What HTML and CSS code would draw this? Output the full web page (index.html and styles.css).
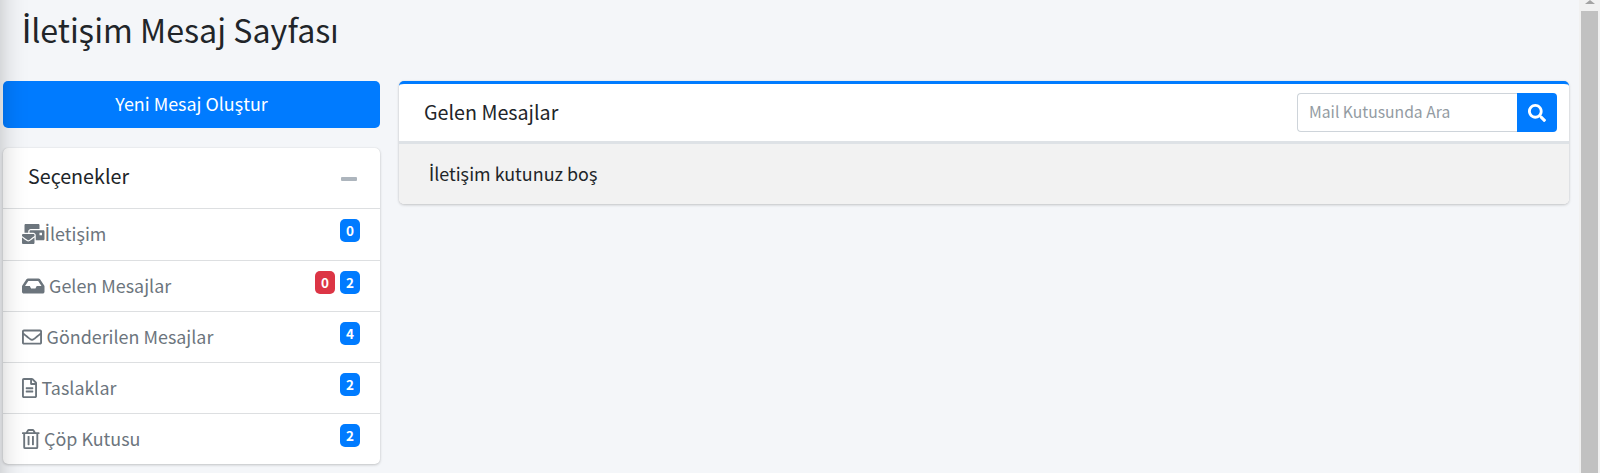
FILE: index.html
```
<!DOCTYPE html>
<html lang="tr">
<head>
<meta charset="utf-8">
<title>İletişim Mesaj Sayfası</title>
<link rel="stylesheet" href="styles.css">
</head>
<body>
<div class="page">
  <div class="sidebar-shadow"></div>
  <div class="content">
    <h1 class="title"><span class="dotted">İ</span>letişim Mesaj Sayfası</h1>
    <div class="columns">
      <div class="left">
        <a class="compose"><span>Yeni Mesaj Oluştur</span></a>
        <section class="card options">
          <header class="options-header"><h3 class="card-title">Seçenekler</h3><i class="collapse"></i></header>
          <ul class="folders">
            <li class="folder">
              <svg class="icon wide" viewBox="0 0 576 512"><path d="M160 448c-25.6 0-51.2-22.4-64-32-64-44.8-83.2-60.8-96-70.4V480c0 17.67 14.33 32 32 32h256c17.67 0 32-14.33 32-32V345.6c-12.8 9.6-32 25.6-96 70.4-12.8 9.6-38.4 32-64 32zm128-192H32c-17.67 0-32 14.33-32 32v16c25.6 19.2 22.4 19.2 115.2 86.4 9.6 6.4 28.8 25.6 44.8 25.6s35.2-19.2 44.8-22.4c92.8-67.2 89.6-67.2 115.2-86.4V288c0-17.67-14.33-32-32-32zm256-96H224c-17.67 0-32 14.33-32 32v32h96c33.21 0 60.59 25.42 63.71 57.82l.29-.22V416h192c17.67 0 32-14.33 32-32V192c0-17.67-14.33-32-32-32zm-32 128h-64v-64h64v64zm-352-96c0-35.29 28.71-64 64-64h224V32c0-17.67-14.33-32-32-32H96C78.33 0 64 14.33 64 32v192h96v-32z"/></svg>
              <span class="name flush"><span class="dotted">İ</span>letişim</span><span class="badge">0</span>
            </li>
            <li class="folder">
              <svg class="icon wide" viewBox="0 0 576 512"><path d="M567.938 243.908L462.25 85.374A48.003 48.003 0 0 0 422.311 64H153.689a48 48 0 0 0-39.938 21.374L8.062 243.908A47.994 47.994 0 0 0 0 270.533V400c0 26.51 21.49 48 48 48h480c26.51 0 48-21.49 48-48V270.533a47.994 47.994 0 0 0-8.062-26.625zM162.252 128h251.497l85.333 128H376l-32 64H232l-32-64H76.918l85.334-128z"/></svg>
              <span class="name">Gelen Mesajlar</span><span class="badge danger">0</span><span class="badge">2</span>
            </li>
            <li class="folder">
              <svg class="icon square" viewBox="0 0 512 512"><path d="M464 64H48C21.49 64 0 85.49 0 112v288c0 26.51 21.49 48 48 48h416c26.51 0 48-21.49 48-48V112c0-26.51-21.49-48-48-48zm0 48v40.805c-22.422 18.259-58.168 46.651-134.587 106.49-16.841 13.247-50.201 45.072-73.413 44.701-23.208.375-56.579-31.459-73.413-44.701C106.18 199.465 70.425 171.067 48 152.805V112h416zM48 400V214.398c22.914 18.251 55.409 43.862 104.938 82.646 21.857 17.205 60.134 55.186 103.062 54.955 42.717.231 80.509-37.199 103.053-54.947 49.528-38.783 82.032-64.401 104.947-82.653V400H48z"/></svg>
              <span class="name">Gönderilen Mesajlar</span><span class="badge">4</span>
            </li>
            <li class="folder">
              <svg class="icon file" viewBox="0 0 384 512"><path d="M288 248v28c0 6.600-5.400 12-12 12H108c-6.600 0-12-5.400-12-12v-28c0-6.600 5.400-12 12-12h168c6.600 0 12 5.400 12 12zm-12 72H108c-6.600 0-12 5.400-12 12v28c0 6.600 5.400 12 12 12h168c6.600 0 12-5.400 12-12v-28c0-6.600-5.400-12-12-12zm108-188.100V464c0 26.500-21.500 48-48 48H48c-26.500 0-48-21.500-48-48V48C0 21.500 21.500 0 48 0h204.100C264.800 0 277 5.100 286 14.100L369.900 98c9 8.900 14.100 21.200 14.100 33.900zm-128-80V128h76.100L256 51.900zM336 464V176H232c-13.300 0-24-10.700-24-24V48H48v416h288z"/></svg>
              <span class="name">Taslaklar</span><span class="badge">2</span>
            </li>
            <li class="folder">
              <svg class="icon trash" viewBox="0 0 448 512"><path d="M268 416h24a12 12 0 0 0 12-12V188a12 12 0 0 0-12-12h-24a12 12 0 0 0-12 12v216a12 12 0 0 0 12 12zM432 80h-82.410l-34-56.700A48 48 0 0 0 274.410 0H173.590a48 48 0 0 0-41.160 23.300L98.410 80H16A16 16 0 0 0 0 96v16a16 16 0 0 0 16 16h16v336a48 48 0 0 0 48 48h288a48 48 0 0 0 48-48V128h16a16 16 0 0 0 16-16V96a16 16 0 0 0-16-16zM171.840 50.910A6 6 0 0 1 177 48h94a6 6 0 0 1 5.150 2.910L293.610 80H154.390zM368 464H80V128h288zm-212-48h24a12 12 0 0 0 12-12V188a12 12 0 0 0-12-12h-24a12 12 0 0 0-12 12v216a12 12 0 0 0 12 12z"/></svg>
              <span class="name">Çöp Kutusu</span><span class="badge">2</span>
            </li>
          </ul>
        </section>
      </div>
      <section class="card inbox">
        <header class="inbox-header">
          <h3 class="card-title">Gelen Mesajlar</h3>
          <div class="search">
            <div class="field"><span>Mail Kutusunda Ara</span></div>
            <div class="search-btn"><svg class="search-icon" viewBox="0 0 512 512"><path d="M505 442.700L405.300 343c-4.500-4.500-10.600-7-17-7H372c27.600-35.300 44-79.700 44-128C416 93.100 322.900 0 208 0S0 93.100 0 208s93.100 208 208 208c48.300 0 92.700-16.400 128-44v16.300c0 6.400 2.500 12.500 7 17l99.700 99.700c9.400 9.400 24.600 9.400 33.900 0l28.300-28.300c9.400-9.400 9.400-24.600.1-34zM208 336c-70.700 0-128-57.200-128-128 0-70.700 57.200-128 128-128 70.700 0 128 57.200 128 128 0 70.700-57.200 128-128 128z"/></svg></div>
          </div>
        </header>
        <div class="empty"><span class="dotted">İ</span>letişim kutunuz boş</div>
      </section>
    </div>
  </div>
  <div class="scrollbar"><i class="arrow"></i><i class="thumb"></i></div>
</div>
</body>
</html>
```
FILE: styles.css
```
* { box-sizing: border-box; }
body {
  margin: 0;
  background: #f4f6f9;
  color: #212529;
  font: 400 17.900px/24px "Source Sans Pro", "Noto Sans CJK JP", "Noto Sans", sans-serif;
}
h1, h3, ul { margin: 0; padding: 0; font-weight: 400; }
.page { display: flex; height: 473px; overflow: hidden; position: relative; }
.sidebar-shadow {
  position: absolute;
  z-index: 2;
  left: -60px;
  top: -60px;
  width: 60px;
  height: 600px;
  box-shadow: 0 14px 28px rgba(0, 0, 0, .22), 0 10px 10px rgba(0, 0, 0, .03);
}
.content { flex: 1; padding: 5px 10px 0 3px; }
.title { padding-left: 19px; height: 76px; font-size: 32.200px; line-height: 48px; white-space: nowrap; }
/* Dotted capital I comes from Lato, sized to the cap height of the text face */
.dotted { font-family: Lato, sans-serif; font-size: 1.02em; line-height: 0; }
.left { width: 377px; }
.columns { display: flex; align-items: flex-start; gap: 19px; }
.compose {
  display: flex;
  align-items: center;
  justify-content: center;
  height: 47px;
  padding-bottom: 3px;
  margin-bottom: 20px;
  border-radius: 5px;
  background: #007bff;
  color: #fff;
}
.card { border-radius: 5px; background: #fff; box-shadow: 0 0 1px rgba(0, 0, 0, .13), 0 1px 3px rgba(0, 0, 0, .2); }
.card-title { font-size: 19.700px; line-height: 28px; }
.options { height: 316px; overflow: hidden; }
.options-header { display: flex; align-items: center; justify-content: space-between; height: 60px; padding: 0 23px 4px 25px; }
.collapse { width: 16px; height: 4px; margin-top: 6px; border-radius: 1px; background: #adb5bd; }
.folders { list-style: none; }
.folder { display: flex; height: 51px; padding: 10px 20px 0 19px; border-top: 1px solid #dddfe1; color: #6c757d; }
.folder:first-child { height: 52px; }
.icon { display: block; height: 20px; margin: 4.500px 0 0 .3px; fill: currentColor; flex: none; }
.wide { width: 22.500px; }
.square { width: 20px; }
.file { width: 15px; }
.trash { width: 17.500px; }
.name { flex: 1; margin: 2px 0 0 4.300px; white-space: nowrap; }
.flush { margin-left: 0; }
.badge {
  width: 20px;
  height: 23px;
  margin-left: 5px;
  border-radius: 5px;
  background: #007bff;
  color: #fff;
  font-size: 13.500px;
  font-weight: 700;
  line-height: 22px;
  text-align: center;
}
.danger { background: #dc3545; }
.inbox { flex: 1; height: 123px; border-top: 3px solid #007bff; overflow: hidden; }
.inbox-header { display: flex; justify-content: space-between; height: 57px; padding: 9px 12px 0 25px; }
.inbox-header .card-title { margin-top: 5px; }
.search { display: flex; width: 260px; height: 39px; }
.field { display: flex; align-items: center; width: 220px; padding: 0 0 1px 11px; border: 1px solid #ced4da; border-right: 0; border-radius: 4px 0 0 4px; color: #939ba2; font-size: 15.700px; }
.search-btn { display: flex; align-items: center; justify-content: center; width: 40px; border-radius: 0 4px 4px 0; background: #007bff; }
.search-icon { width: 18px; height: 18px; fill: #fff; }
.empty { height: 63px; padding: 17px 0 0 30px; border-top: 3px solid #dee2e6; background: #f2f2f2; }
.scrollbar { display: flex; flex-direction: column; align-items: center; width: 21px; background: #f1f1f1; }
.arrow { border: 5px solid transparent; border-top: 0; border-bottom: 4px solid #a3a3a3; margin-bottom: 7px; }
.thumb { flex: 1; width: 17px; background: #c1c1c1; }
```
